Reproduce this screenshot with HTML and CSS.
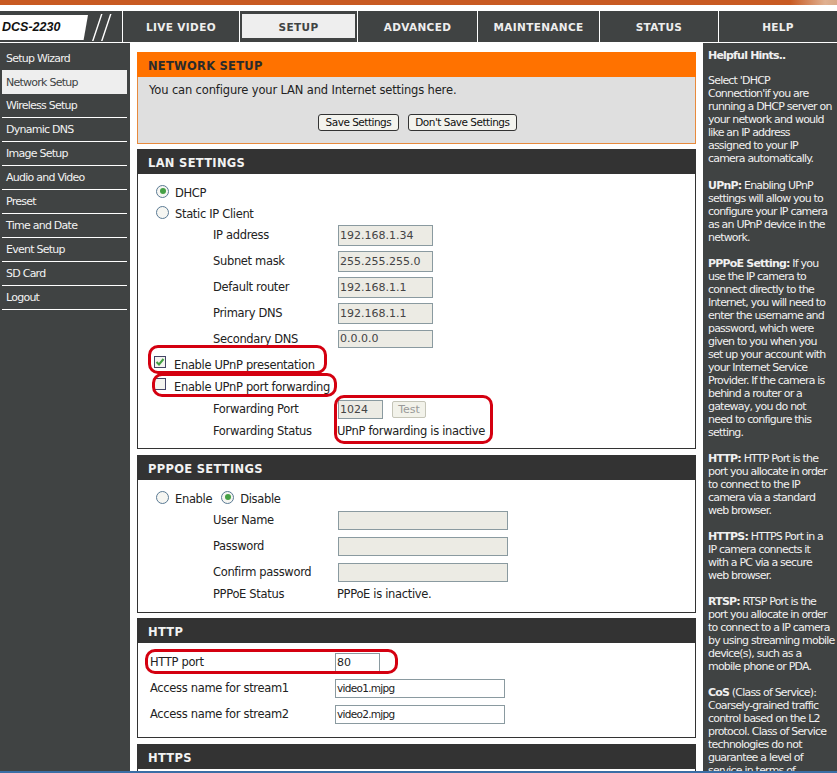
FILE: index.html
```html
<!DOCTYPE html>
<html lang="en">
<head>
<meta charset="utf-8">
<title>DCS-2230 Network Setup</title>
<link rel="stylesheet" href="styles.css">
</head>
<body>
<div class="page">
  <div class="topband"></div>
  <header class="topnav">
    <div class="brand">
      <div class="model">DCS-2230</div>
      <svg class="slashes" width="30" height="27" viewBox="0 0 30 27"><path d="M13 0h1.500L5.500 27H4zM22 0h1.500L14.500 27H13z" fill="#fff"/></svg>
    </div>
    <a class="tab t1">LIVE VIDEO</a>
    <a class="tab t2 active"><span>SETUP</span></a>
    <a class="tab t3">ADVANCED</a>
    <a class="tab t4">MAINTENANCE</a>
    <a class="tab t5">STATUS</a>
    <a class="tab t6">HELP</a>
  </header>
  <div class="columns">
    <nav class="sidebar">
      <a class="side">Setup Wizard</a>
      <a class="side current">Network Setup</a>
      <a class="side">Wireless Setup</a>
      <a class="side">Dynamic DNS</a>
      <a class="side">Image Setup</a>
      <a class="side">Audio and Video</a>
      <a class="side">Preset</a>
      <a class="side">Time and Date</a>
      <a class="side">Event Setup</a>
      <a class="side">SD Card</a>
      <a class="side">Logout</a>
    </nav>
    <main class="content">
      <section class="intro">
        <h2 class="intro-head">NETWORK SETUP</h2>
        <div class="intro-body">
          <p class="intro-text">You can configure your LAN and Internet settings here.</p>
          <div class="btns"><button class="btn">Save Settings</button><button class="btn">Don't Save Settings</button></div>
        </div>
      </section>

      <section class="panel lan">
        <h2 class="head">LAN SETTINGS</h2>
        <div class="radio-row r-dhcp"><span class="radio on"></span><span>DHCP</span></div>
        <div class="radio-row r-static"><span class="radio"></span><span>Static IP Client</span></div>
        <div class="row"><label>IP address</label><span class="field short dis">192.168.1.34</span></div>
        <div class="row"><label>Subnet mask</label><span class="field short dis">255.255.255.0</span></div>
        <div class="row"><label>Default router</label><span class="field short dis">192.168.1.1</span></div>
        <div class="row"><label>Primary DNS</label><span class="field short dis">192.168.1.1</span></div>
        <div class="row"><label>Secondary DNS</label><span class="field wide-dns dis">0.0.0.0</span></div>
        <div class="check-row c1"><span class="check on"><svg width="10" height="10" viewBox="0 0 10 10"><path d="M1.500 5l2.500 2.500L8.500 2" fill="none" stroke="#3f9f3f" stroke-width="2"/></svg></span><span>Enable UPnP presentation</span></div>
        <div class="check-row c2"><span class="check"></span><span>Enable UPnP port forwarding</span></div>
        <div class="row tight fp"><label>Forwarding Port</label><span class="field port dis">1024</span><span class="test">Test</span></div>
        <div class="row tight fs"><label>Forwarding Status</label><span class="status">UPnP forwarding is inactive</span></div>
        <i class="oval o1"></i><i class="oval o2"></i><i class="oval o3"></i>
      </section>

      <section class="panel pppoe">
        <h2 class="head">PPPOE SETTINGS</h2>
        <div class="radio-row r-ppp"><span class="radio"></span><span>Enable</span><span class="radio on second"></span><span>Disable</span></div>
        <div class="row pp"><label>User Name</label><span class="field long dis"></span></div>
        <div class="row pp"><label>Password</label><span class="field long dis"></span></div>
        <div class="row pp"><label>Confirm password</label><span class="field long dis"></span></div>
        <div class="row tight"><label>PPPoE Status</label><span class="status">PPPoE is inactive.</span></div>
      </section>

      <section class="panel http">
        <h2 class="head">HTTP</h2>
        <div class="row h"><label>HTTP port</label><span class="field port80">80</span></div>
        <div class="row h"><label>Access name for stream1</label><span class="field stream">video1.mjpg</span></div>
        <div class="row h"><label>Access name for stream2</label><span class="field stream">video2.mjpg</span></div>
        <i class="oval o4"></i>
      </section>

      <section class="panel https">
        <h2 class="head">HTTPS</h2>
      </section>
    </main>
    <aside class="hints">
      <h3 class="hints-title">Helpful Hints..</h3>
      <p class="lead">Select 'DHCP<br>Connection'if you are<br>running a DHCP server on<br>your network and would<br>like an IP address<br>assigned to your IP<br>camera automatically.</p>
      <p><b>UPnP:</b> Enabling UPnP<br>settings will allow you to<br>configure your IP camera<br>as an UPnP device in the<br>network.</p>
      <p><b>PPPoE Setting:</b> If you<br>use the IP camera to<br>connect directly to the<br>Internet, you will need to<br>enter the username and<br>password, which were<br>given to you when you<br>set up your account with<br>your Internet Service<br>Provider. If the camera is<br>behind a router or a<br>gateway, you do not<br>need to configure this<br>setting.</p>
      <p><b>HTTP:</b> HTTP Port is the<br>port you allocate in order<br>to connect to the IP<br>camera via a standard<br>web browser.</p>
      <p><b>HTTPS:</b> HTTPS Port in a<br>IP camera connects it<br>with a PC via a secure<br>web browser.</p>
      <p><b>RTSP:</b> RTSP Port is the<br>port you allocate in order<br>to connect to a IP camera<br>by using streaming mobile<br>device(s), such as a<br>mobile phone or PDA.</p>
      <p><b>CoS</b> (Class of Service):<br>Coarsely-grained traffic<br>control based on the L2<br>protocol. Class of Service<br>technologies do not<br>guarantee a level of<br>service in terms of</p>
    </aside>
  </div>
  <div class="winedge"></div>
</div>
</body>
</html>
```
FILE: styles.css
```css
* { box-sizing: border-box; }
html, body { margin: 0; padding: 0; background: #fff; }
body { font-family: "DejaVu Sans", sans-serif; font-size: 11.5px; letter-spacing: -.33px; color: #222; }
.page { position: relative; width: 837px; height: 773px; overflow: hidden; display: flex; flex-direction: column; }
.topband { height: 5px; background: linear-gradient(to right, #c85a22 0, #c85a22 790px, #e0b090 825px, #d8a888 837px); flex: none; }
.topnav { margin-top: 5px; height: 33px; flex: none; background: #404343; border-top: 1px solid #fff; border-bottom: 1px solid #fff; display: flex; }
.brand { width: 123px; flex: none; border-right: 1px solid #fff; display: flex; align-items: center; padding: 2px 0 0 0; }
.model { width: 88px; height: 25px; background: #fff; color: #111; font: italic bold 12.5px/25px "Liberation Sans", sans-serif; letter-spacing: 0; padding-left: 2px; clip-path: polygon(0 0, 100% 0, 95% 100%, 0 100%); }
.slashes { margin-left: 0; }
.tab { display: flex; align-items: center; justify-content: center; padding-top: 1px; color: #eee; font: bold 10.500px "DejaVu Sans", sans-serif; letter-spacing: .35px; border-right: 1px solid #fff; }
.t1 { width: 117px; } .t2 { width: 118px; padding: 3px 2px 4px; } .t3 { width: 120px; } .t4 { width: 122px; } .t5 { width: 119px; } .t6 { flex: 1; border-right: 0; }
.active span { background: #eee; color: #404343; width: 100%; height: 100%; display: flex; align-items: center; justify-content: center; padding-top: 1px; }
.columns { flex: 1; min-height: 0; display: flex; }
.sidebar { width: 130px; flex: none; background: #404343; padding: 4px 3px 0 2px; }
.side { display: flex; align-items: center; height: 24px; padding-left: 4px; color: #f2f2f2; font: 11px/1 "DejaVu Sans", sans-serif; letter-spacing: -.75px; border-bottom: 1px solid #fff; }
.side:first-child { border-bottom: 0; height: 23px; }
.side.current { background: #eee; color: #404343; border-bottom: 0; height: 24px; }
.content { width: 573px; flex: none; padding: 9px 0 0 7px; }
.intro { width: 559px; height: 92px; border: 1px solid #e88a3c; border-top: 0; background: #dfdfdf; }
.intro-head { margin: 0 -1px; height: 25px; background: #ff7200; color: #2b2b2b; font: bold 11.5px/29px "DejaVu Sans", sans-serif; letter-spacing: .25px; padding-left: 11px; }
.intro-body { padding: 6px 11px 0; }
.intro-text { margin: 0; font-size: 11.5px; line-height: 15px; letter-spacing: -.15px; }
.btns { display: flex; justify-content: center; gap: 9px; margin-top: 16px; padding-left: 2px; }
.btn { height: 17px; padding: 0 6.5px; background: #f3f3ee; border: 1px solid #333; border-radius: 3px; font: 10.5px/15px "DejaVu Sans", sans-serif; letter-spacing: -.5px; color: #111; }
.panel { position: relative; width: 559px; margin-top: 6px; border: 1px solid #333; border-top: 0; background: #fff; }
.lan { margin-top: 5px; height: 300px; }
.pppoe { height: 158px; }
.http { margin-top: 5px; height: 120px; }
.https { margin-top: 6px; height: 40px; }
.head { margin: 0 -1px; height: 25px; background: #333; color: #f2f2f2; font: bold 11.5px/29px "DejaVu Sans", sans-serif; letter-spacing: .3px; padding-left: 11px; }
.radio-row { display: flex; align-items: center; height: 21px; padding-left: 18px; gap: 6px; }
.r-dhcp { margin-top: 8px; }
.r-static { margin-bottom: -2px; }
.r-ppp { margin-top: 8px; }
.radio { width: 13px; height: 13px; border-radius: 50%; border: 1px solid #5a7a94; background: #f6f6f2; display: flex; align-items: center; justify-content: center; margin-top: -3px; }
.radio.on::after { content: ""; width: 6px; height: 6px; border-radius: 50%; background: #45a045; }
.second { margin-left: 3px; }
.row { display: flex; align-items: center; height: 26px; padding-left: 75px; }
.row label { width: 125px; flex: none; }
.field { display: block; height: 21px; border: 1px solid #8a9aa0; font-size: 11px; line-height: 19px; padding-left: 1px; color: #222; letter-spacing: 0; }
.dis { background: #ecebe4; color: #444; }
.short { width: 95px; } .wide-dns { width: 95px; height: 18px; line-height: 16px; }
.check-row { display: flex; align-items: center; height: 21px; padding-left: 16px; gap: 8px; }
.c1 { margin-top: 2px; } .c2 { margin-top: 1px; }
.check { width: 12px; height: 12px; border: 1px solid #446; background: #f4f4f0; display: flex; margin-top: -5px; }
.tight { height: 22px; }
.fp { margin-top: 1px; }
.port { width: 45px; height: 19px; line-height: 17px; }
.test { margin-left: 9px; width: 34px; height: 17px; text-align: center; border: 1px solid #c5c5b8; border-radius: 2px; background: #f2f2ea; color: #999; font-size: 11px; line-height: 15px; letter-spacing: 0; }
.status { margin-left: -1px; }
.pp { height: 26px; }
.r-ppp + .pp { margin-top: -2px; }
.pp + .tight { margin-top: -2px; }
.long { width: 170px; height: 19px; }
.h { height: 26px; padding-left: 12px; }
.h label { width: 185px; }
.port80 { width: 45px; height: 19px; line-height: 17px; background: #fff; }
.stream { width: 170px; height: 19px; line-height: 17px; background: #fff; font-size: 10.5px; letter-spacing: -.7px; }
.head + .h { margin-top: 6px; }
.oval { position: absolute; border: 3px solid #d40010; border-radius: 10px; }
.o1 { left: 10px; top: 196px; width: 179px; height: 29px; }
.o2 { left: 14px; top: 224px; width: 185px; height: 24px; }
.o3 { left: 196px; top: 246px; width: 159px; height: 49px; }
.o4 { left: 7px; top: 31px; width: 253px; height: 25px; }
.hints { flex: 1; background: #404343; color: #f0f0f0; padding: 6px 0 0 5px; font: 11px/13px "DejaVu Sans", sans-serif; letter-spacing: -.8px; overflow: hidden; white-space: nowrap; }
.hints-title { margin: 0 0 12px; font: bold 11px/13px "DejaVu Sans", sans-serif; }
.hints p { margin: 0 0 13px; }
.hints .lead { margin-bottom: 14px; }
.winedge { position: absolute; left: 0; right: 0; bottom: 0; height: 2px; background: #3a6ea5; }
```
